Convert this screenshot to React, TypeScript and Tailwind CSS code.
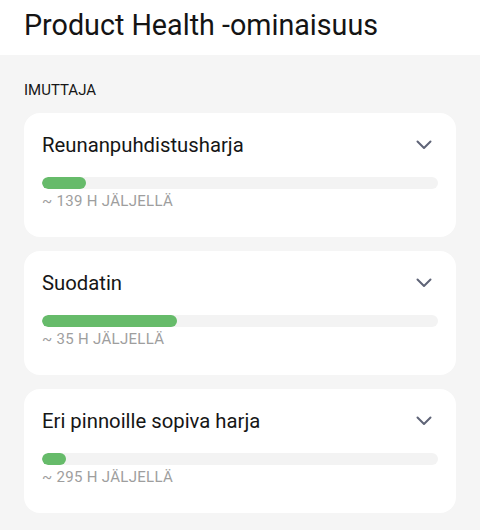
import React from "react";

const parts = [
  { name: "Reunanpuhdistusharja", hours: 139, fill: 44 },
  { name: "Suodatin", hours: 35, fill: 135 },
  { name: "Eri pinnoille sopiva harja", hours: 295, fill: 24 },
];

function Chevron() {
  return (
    <svg width="16" height="10" viewBox="0 0 16 10" fill="none" className="text-[#5f6477]">
      <path d="M1.5 1.5 L8 8 L14.5 1.5" stroke="currentColor" strokeWidth="2" strokeLinecap="round" strokeLinejoin="round" />
    </svg>
  );
}

function PartCard({ name, hours, fill }: { name: string; hours: number; fill: number }) {
  return (
    <div className="rounded-[16px] bg-white pl-[18px] pr-[18px] pt-[18px] pb-[26px]">
      <div className="flex h-[28px] items-center justify-between">
        <span className="text-[20.3px] leading-[28px] text-[#161616]">{name}</span>
        <span className="mr-[6px]">
          <Chevron />
        </span>
      </div>
      <div className="mt-[18px] h-[12px] w-full overflow-hidden rounded-full bg-[#f3f3f3]">
        <div className="h-full rounded-full bg-[#66bb6a]" style={{ width: fill }} />
      </div>
      <div className="mt-[2px] text-[15px] leading-[20px] tracking-[0.3px] text-[#9e9e9e]">~ {hours} H JÄLJELLÄ</div>
    </div>
  );
}

export default function App() {
  return (
    <div className="h-[530px] w-[480px] bg-[#f5f5f5] font-['Roboto',sans-serif]">
      <header className="h-[55px] bg-white pl-[24px] pt-[7px]">
        <h1 className="text-[28.7px] leading-[36px] text-[#141414]">Product Health -ominaisuus</h1>
      </header>
      <div className="px-[24px] pt-[25px]">
        <div className="text-[15px] leading-[20px] text-[#161616]">IMUTTAJA</div>
        <div className="mt-[13px] flex flex-col gap-[14px]">
          {parts.map((p) => (
            <PartCard key={p.name} {...p} />
          ))}
        </div>
      </div>
    </div>
  );
}
